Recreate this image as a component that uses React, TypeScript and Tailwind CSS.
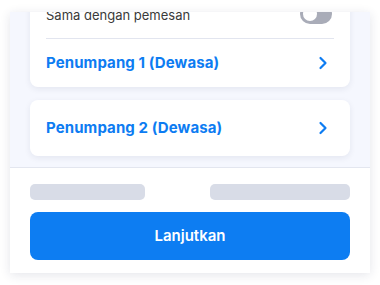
import React from "react";

function Chevron() {
  return (
    <svg width="10" height="14" viewBox="0 0 10 14" fill="none" className="shrink-0">
      <path d="M2.5 2L7.5 7L2.5 12" stroke="#0D7CF2" strokeWidth="2.2" strokeLinecap="round" strokeLinejoin="round" />
    </svg>
  );
}

function PassengerRow({ label }: { label: string }) {
  return (
    <div className="flex items-center justify-between h-[48px] pr-[22px]">
      <span className="text-[15px] font-bold text-[#0D7CF2] tracking-[0.1px]">{label}</span>
      <Chevron />
    </div>
  );
}

export default function App() {
  return (
    <div
      className="w-[380px] h-[285px] bg-white px-[10px] pt-[12px]"
      style={{ fontFamily: "Inter, 'Noto Sans', sans-serif" }}
    >
      <div className="h-[261px] flex flex-col overflow-hidden bg-white shadow-[0_2px_10px_rgba(30,40,80,0.12)]">
        {/* Scroll area */}
        <div className="h-[155px] shrink-0 overflow-hidden bg-[#F5F7FE] px-[20px]">
          <div className="-mt-[24px] flex flex-col gap-[13px]">
            <div className="rounded-lg bg-white shadow-[0_2px_6px_rgba(30,40,80,0.08)] pl-[16px] pt-[16px]">
              <div className="flex items-center justify-between h-[20px] pr-[18px]">
                <span className="text-[13px] leading-[20px] pt-[2px] text-[#3A3A3A]">Sama dengan pemesan</span>
                <div className="w-[32px] h-[20px] rounded-full bg-[#A9ACB8] p-[3px] flex">
                  <div className="w-[14px] h-[14px] rounded-full bg-white" />
                </div>
              </div>
              <div className="mt-[14px] mr-[16px] h-px bg-[#E2E5EF]" />
              <PassengerRow label="Penumpang 1 (Dewasa)" />
            </div>
            <div className="rounded-lg bg-white shadow-[0_2px_6px_rgba(30,40,80,0.08)] pl-[16px] py-[4px]">
              <PassengerRow label="Penumpang 2 (Dewasa)" />
            </div>
          </div>
        </div>

        {/* Footer */}
        <div className="border-t border-[#E3E6EF] px-[20px] pt-[16px]">
          <div className="flex justify-between">
            <div className="w-[115px] h-[16px] rounded-[5px] bg-[#D8DCE7]" />
            <div className="w-[140px] h-[16px] rounded-[5px] bg-[#D8DCE7]" />
          </div>
          <button className="mt-[12px] w-full h-[48px] rounded-lg bg-[#0D7DF2] text-white text-[15px] font-semibold">
            Lanjutkan
          </button>
        </div>
      </div>
    </div>
  );
}
